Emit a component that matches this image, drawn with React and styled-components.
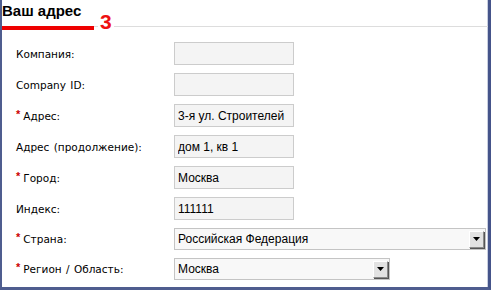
import React from "react";
import styled, { createGlobalStyle } from "styled-components";

const Global = createGlobalStyle`
  html, body { margin: 0; padding: 0; background: #fff; }
  body { width: 491px; height: 290px; overflow: hidden; }
`;

const Frame = styled.div`
  box-sizing: border-box;
  width: 491px;
  height: 290px;
  background: #fff;
  border-left: 2px solid #4f5d8f;
  border-right: 3px solid #45548a;
  border-bottom: 3px solid #4f5d8f;
  box-shadow: inset -1px 0 0 #c9cfe0;
  position: relative;
`;

const Header = styled.div`
  display: flex;
  align-items: flex-start;
  position: relative;
  height: 30px;
`;

const Title = styled.h2`
  box-sizing: border-box;
  margin: 0;
  width: 92px;
  height: 30px;
  padding-top: 2px;
  border-bottom: 4px solid #ee0000;
  font-family: "Liberation Sans", Arial, sans-serif;
  font-weight: bold;
  font-size: 15px;
  line-height: 18px;
  color: #000;
  white-space: nowrap;
`;

const Rule = styled.div`
  flex: 1;
  height: 26px;
  border-bottom: 1px solid #dddddd;
`;

const StepMark = styled.span`
  position: absolute;
  left: 96px;
  top: 10px;
  padding: 0 2px;
  background: #fff;
  font-family: "Liberation Sans", Arial, sans-serif;
  font-weight: bold;
  font-size: 21px;
  line-height: 24px;
  color: #ee1111;
`;

const Form = styled.div`
  display: flex;
  flex-direction: column;
  gap: 8px;
  padding: 12px 0 0 14px;
`;

const Row = styled.div`
  display: flex;
  align-items: center;
`;

const Label = styled.div`
  width: 158px;
  font-family: "DejaVu Sans", Tahoma, sans-serif;
  font-size: 10.5px;
  word-spacing: 1px;
  color: #000;
  white-space: nowrap;
  display: flex;
  align-items: center;
`;

const Star = styled.span`
  color: #cc0000;
  font-family: "Liberation Sans", Arial, sans-serif;
  font-weight: bold;
  font-size: 11px;
  margin-right: 3px;
  position: relative;
  top: -2px;
`;

const Field = styled.input`
  box-sizing: border-box;
  width: 120px;
  height: 23px;
  margin: 0;
  padding: 0 0 0 3px;
  border: 1px solid #cccccc;
  background: #f4f4f4;
  font-family: "Liberation Sans", Arial, sans-serif;
  font-size: 12px;
  color: #000;
  outline: none;
`;

const Select = styled.div`
  box-sizing: border-box;
  width: ${(p) => p.$w}px;
  height: 22px;
  border: 1px solid #c4c4c4;
  background: #f8f8f8;
  display: flex;
  align-items: center;
  justify-content: space-between;
  padding: 0 1px 0 3px;
  font-family: "Liberation Sans", Arial, sans-serif;
  font-size: 12px;
  color: #000;
`;

const Arrow = styled.span`
  box-sizing: border-box;
  width: 15px;
  height: 17px;
  background: #e2e2e2;
  border-top: 1px solid #ffffff;
  border-left: 1px solid #ffffff;
  border-right: 1px solid #8a8a8a;
  border-bottom: 1px solid #8a8a8a;
  box-shadow: 1px 1px 0 #555;
  display: flex;
  align-items: center;
  justify-content: center;
`;

const Tri = () => (
  <svg width="7" height="4" viewBox="0 0 7 4">
    <path d="M0 0H7L3.5 4Z" fill="#000" />
  </svg>
);

const rows = [
  { label: "Компания:", value: "" },
  { label: "Company ID:", value: "" },
  { label: "Адрес:", value: "3-я ул. Строителей", req: true },
  { label: "Адрес (продолжение):", value: "дом 1, кв 1" },
  { label: "Город:", value: "Москва", req: true },
  { label: "Индекс:", value: "111111" },
];

export default function App() {
  return (
    <>
      <Global />
      <Frame>
        <Header>
          <Title>Ваш адрес</Title>
          <Rule />
          <StepMark>3</StepMark>
        </Header>
        <Form>
          {rows.map((r) => (
            <Row key={r.label}>
              <Label>
                {r.req && <Star>*</Star>}
                {r.label}
              </Label>
              <Field readOnly value={r.value} />
            </Row>
          ))}
          <Row>
            <Label>
              <Star>*</Star>Страна:
            </Label>
            <Select $w={312}>
              <span>Российская Федерация</span>
              <Arrow>
                <Tri />
              </Arrow>
            </Select>
          </Row>
          <Row>
            <Label>
              <Star>*</Star>Регион / Область:
            </Label>
            <Select $w={216}>
              <span>Москва</span>
              <Arrow>
                <Tri />
              </Arrow>
            </Select>
          </Row>
        </Form>
      </Frame>
    </>
  );
}
